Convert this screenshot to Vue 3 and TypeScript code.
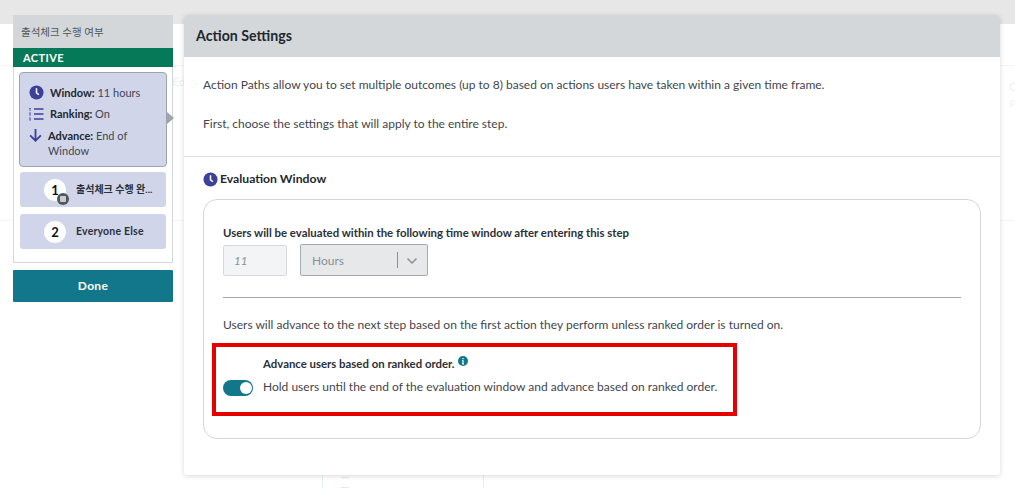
<script setup lang="ts">
interface Outcome {
  id: number
  label: string
  badge: boolean
  korean: boolean
}

const outcomes: Outcome[] = [
  { id: 1, label: '출석체크 수행 완...', badge: true, korean: true },
  { id: 2, label: 'Everyone Else', badge: false, korean: false },
]
</script>

<template>
  <div class="page">
    <div class="backdrop" aria-hidden="true">
      <div class="strip"></div>
      <div class="bg-line l1"></div>
      <div class="bg-line l2"></div>
      <span class="ghost g1">Ed</span>
      <span class="ghost g2">C</span>
      <span class="ghost g3">P</span>
      <div class="ghost-box"><i></i><i class="low"></i></div>
    </div>

    <aside class="side">
      <div class="side-title">출석체크 수행 여부</div>
      <div class="status">ACTIVE</div>
      <div class="side-body">
        <div class="summary">
          <div class="sum-row">
            <svg class="ic-clock" viewBox="0 0 16 16"><circle cx="8" cy="8" r="7.500" fill="#3c4099" /><path d="M8 3.500V8.400l2.600 2" fill="none" stroke="#fff" stroke-width="1.600" /></svg>
            <span><b>Window:</b> 11 hours</span>
          </div>
          <div class="sum-row">
            <svg class="ic-list" viewBox="0 0 15 14"><g fill="none" stroke="#3c4099"><path d="M5 2h9.500M5 7h9.500M5 12h9.500" stroke-width="1.300" /><path d="M1 1v2.600M1 5.500v3M1 10.500v3" stroke-width="1.400" stroke-dasharray="1.200 .6" /></g></svg>
            <span><b>Ranking:</b> On</span>
          </div>
          <div class="sum-row adv">
            <svg class="ic-down" viewBox="0 0 12 13"><path d="M6 1v10.500M1 6.800l5 5 5-5" fill="none" stroke="#3c4099" stroke-width="1.700" /></svg>
            <span class="adv-text"><b>Advance:</b> End of Window</span>
          </div>
          <i class="caret"></i>
        </div>
        <div v-for="o in outcomes" :key="o.id" class="outcome">
          <div class="num">
            {{ o.id }}
            <span v-if="o.badge" class="num-badge"><i></i></span>
          </div>
          <span class="out-label" :class="{ ko: o.korean }">{{ o.label }}</span>
        </div>
      </div>
      <button class="done" type="button">Done</button>
    </aside>

    <main class="panel">
      <header class="panel-head">Action Settings</header>
      <section class="intro">
        <p>Action Paths allow you to set multiple outcomes (up to 8) based on actions users have taken within a given time frame.</p>
        <p>First, choose the settings that will apply to the entire step.</p>
      </section>
      <section class="eval">
        <h3 class="eval-title">
          <svg class="ic-clock-2" viewBox="0 0 16 16"><circle cx="8" cy="8" r="7.500" fill="#3c4099" /><path d="M8 3.500V8.400l2.600 2" fill="none" stroke="#fff" stroke-width="1.600" /></svg>
          Evaluation Window
        </h3>
        <div class="card">
          <div class="field-label">Users will be evaluated within the following time window after entering this step</div>
          <div class="fields">
            <div class="num-input">11</div>
            <div class="select">
              <span class="sel-value">Hours</span>
              <i class="sel-sep"></i>
              <svg class="sel-chev" viewBox="0 0 12 8"><path d="M1.500 1.500 6 6l4.500-4.500" fill="none" stroke="#8a9095" stroke-width="1.500" /></svg>
            </div>
          </div>
          <hr class="rule" />
          <p class="advance-note">Users will advance to the next step based on the first action they perform unless ranked order is turned on.</p>
          <div class="ranked">
            <div class="ranked-head">
              <b>Advance users based on ranked order.</b>
              <svg class="ic-info" viewBox="0 0 10 10"><circle cx="5" cy="5" r="5" fill="#12778a" /><path d="M5 2v1.300M5 4.300V8M4 4.500h1M4 8h2" stroke="#fff" stroke-width="1.200" fill="none" /></svg>
            </div>
            <div class="ranked-row">
              <span class="toggle"><i></i></span>
              <span>Hold users until the end of the evaluation window and advance based on ranked order.</span>
            </div>
          </div>
        </div>
      </section>
    </main>
  </div>
</template>

<style>
html, body {
  margin: 0;
  background: #fff;
}
</style>

<style scoped>
.page {
  position: relative;
  width: 1015px;
  height: 488px;
  overflow: hidden;
  display: flex;
  align-items: flex-start;
  gap: 11px;
  padding: 15px 15px 0 13px;
  box-sizing: border-box;
  background: #fff;
  color: #3f464d;
  font-family: Lato, "Noto Sans CJK KR", sans-serif;
  font-size: 12px;
}
.backdrop {
  position: absolute;
  inset: 0;
}
.strip {
  height: 24px;
  background: #e7e7e7;
}
.bg-line {
  position: absolute;
  left: 0;
  right: 0;
  height: 1px;
  background: #f5f6f7;
}
.l1 { top: 65px; }
.l2 { top: 220px; }
.ghost {
  position: absolute;
  color: #e8f1f2;
  font-size: 12px;
}
.g1 { left: 172px; top: 74px; }
.g2 { left: 1009px; top: 79px; color: #eef0f1; }
.g3 { left: 1009px; top: 96px; color: #f0f2f3; }
.ghost-box {
  position: absolute;
  left: 322px;
  top: 470px;
  width: 162px;
  height: 40px;
  border: 1px solid #e6eef2;
  box-sizing: border-box;
  background: #fff;
}
.ghost-box i {
  position: absolute;
  left: 18px;
  top: 6px;
  width: 8px;
  height: 1px;
  background: #e4e6e8;
}
.ghost-box i.low { top: 16px; }
.side {
  position: relative;
  width: 160px;
  flex: none;
}
.side-title {
  height: 33px;
  line-height: 34px;
  padding-left: 8px;
  background: #d3d7da;
  font-size: 10.500px;
  color: #4f565c;
}
.status {
  height: 19px;
  line-height: 19px;
  padding-left: 10px;
  background: #067a58;
  color: #fff;
  font-size: 11px;
  font-weight: 700;
  letter-spacing: .4px;
}
.side-body {
  height: 196px;
  box-sizing: border-box;
  background: #fff;
  border: 1px solid #d3d7da;
  border-top: 0;
  padding: 5px 5px 0;
}
.summary {
  position: relative;
  height: 95px;
  box-sizing: border-box;
  background: #d0d5ea;
  border: 1px solid #9da4ab;
  border-radius: 4px;
  padding: 12px 0 0 9px;
  font-size: 11px;
  line-height: 15px;
  color: #414850;
}
.summary b {
  color: #22282e;
  font-weight: 700;
}
.sum-row {
  display: flex;
  align-items: center;
  height: 15px;
  margin-bottom: 6px;
}
.sum-row span { margin-left: 6px; }
.adv {
  align-items: flex-start;
  height: 30px;
  margin-top: 7px;
}
.adv .adv-text {
  margin-left: 6px;
  width: 92px;
}
.ic-clock { width: 15px; height: 15px; flex: none; }
.ic-list { width: 15px; height: 14px; flex: none; }
.ic-down { width: 13px; height: 14px; flex: none; }
.caret {
  position: absolute;
  right: -8px;
  top: 39px;
  border-left: 7px solid #9da4ab;
  border-top: 6px solid transparent;
  border-bottom: 6px solid transparent;
}
.outcome {
  display: flex;
  align-items: center;
  height: 35px;
  margin: 5px 1px 7px;
  background: #d0d5ea;
  border-radius: 3px;
}
.outcome + .outcome { margin-top: 0; }
.num {
  position: relative;
  width: 22px;
  height: 22px;
  margin-left: 24px;
  border-radius: 50%;
  background: #fff;
  color: #111;
  text-align: center;
  line-height: 22px;
  font-size: 13px;
  font-weight: 700;
}
.num-badge {
  position: absolute;
  right: -3px;
  bottom: -4px;
  width: 12px;
  height: 12px;
  border-radius: 50%;
  background: #4f565c;
}
.num-badge i {
  position: absolute;
  left: 3px;
  top: 3px;
  width: 6px;
  height: 6px;
  background: #c8ccd0;
  border-radius: 1px;
}
.out-label {
  margin: 0 0 2px 10px;
  font-size: 10.500px;
  font-weight: 700;
  color: #2b3137;
  letter-spacing: .2px;
  white-space: nowrap;
}
.out-label.ko { font-size: 10px; letter-spacing: 0; }
.done {
  display: block;
  width: 100%;
  height: 32px;
  margin-top: 7px;
  padding: 0 0 2px;
  border: 0;
  border-radius: 1px;
  background: #12778a;
  color: #fff;
  font: 700 12px Lato, sans-serif;
  letter-spacing: .3px;
}
.panel {
  position: relative;
  width: 816px;
  height: 460px;
  flex: none;
  box-sizing: border-box;
  background: #fff;
  border-radius: 3px;
  box-shadow: 0 1px 5px rgba(0, 0, 0, .16);
}
.panel-head {
  height: 42px;
  line-height: 41px;
  padding-left: 12px;
  background: #d3d7da;
  border-radius: 3px 3px 0 0;
  color: #22282e;
  font-size: 14.200px;
  font-weight: 700;
}
.intro {
  height: 100px;
  box-sizing: border-box;
  padding: 20px 19px 0;
  border-bottom: 1px solid #dcdfe2;
}
.intro p {
  margin: 0 0 23px;
  line-height: 16px;
}
.eval {
  padding: 14px 19px 0 19px;
}
.eval-title {
  display: flex;
  align-items: center;
  gap: 2px;
  margin: 0 0 13px;
  height: 15px;
  font-size: 12.200px;
  font-weight: 700;
  color: #22282e;
}
.ic-clock-2 { width: 15px; height: 15px; margin-top: 1px; }
.card {
  width: 778px;
  height: 240px;
  box-sizing: border-box;
  border: 1px solid #d3d7da;
  border-radius: 14px;
  padding: 26px 19px 0;
}
.field-label {
  font-size: 11.400px;
  line-height: 14px;
  font-weight: 700;
  color: #2b3137;
}
.fields {
  display: flex;
  gap: 13px;
  align-items: center;
  margin-top: 4px;
}
.num-input {
  width: 64px;
  height: 31px;
  box-sizing: border-box;
  margin-top: 1px;
  padding-left: 10px;
  background: #f3f4f5;
  border: 1px solid #d6d9dc;
  border-radius: 2px;
  line-height: 30px;
  font-style: italic;
  font-size: 11.500px;
  color: #8a9095;
}
.select {
  display: flex;
  align-items: center;
  width: 128px;
  height: 32px;
  box-sizing: border-box;
  background: #e7e8ea;
  border: 1px solid #a4a9ad;
  border-radius: 2px;
  padding-left: 11px;
  color: #8a9095;
  font-size: 12px;
}
.sel-value { flex: 1; }
.sel-sep {
  width: 1px;
  height: 16px;
  background: #8a9095;
}
.sel-chev {
  width: 12px;
  height: 8px;
  margin: 1px 9px 0 8px;
}
.rule {
  margin: 21px 0 0;
  border: 0;
  border-top: 1px solid #a4a9ad;
}
.advance-note {
  margin: 0;
  padding-top: 19px;
  line-height: 16px;
  font-size: 12px;
}
.ranked {
  margin-top: 10px;
  margin-left: -11px;
  width: 525px;
  height: 73px;
  box-sizing: border-box;
  border: 4px solid #e60000;
  padding: 10px 0 0 7px;
}
.ranked-head {
  display: flex;
  align-items: flex-start;
  padding-left: 40px;
  height: 18px;
  line-height: 14px;
  font-size: 11.400px;
  color: #2b3137;
}
.ic-info {
  width: 10px;
  height: 10px;
  margin: -1px 0 0 3px;
}
.ranked-row {
  display: flex;
  align-items: center;
  gap: 10px;
  margin-top: 2px;
  font-size: 12px;
  line-height: 16px;
  white-space: nowrap;
}
.toggle {
  position: relative;
  width: 30px;
  height: 16px;
  flex: none;
  margin-top: 3px;
  border-radius: 8px;
  background: #12778a;
}
.toggle i {
  position: absolute;
  right: 1px;
  top: 2px;
  width: 12px;
  height: 12px;
  border-radius: 50%;
  background: #fff;
}
</style>
